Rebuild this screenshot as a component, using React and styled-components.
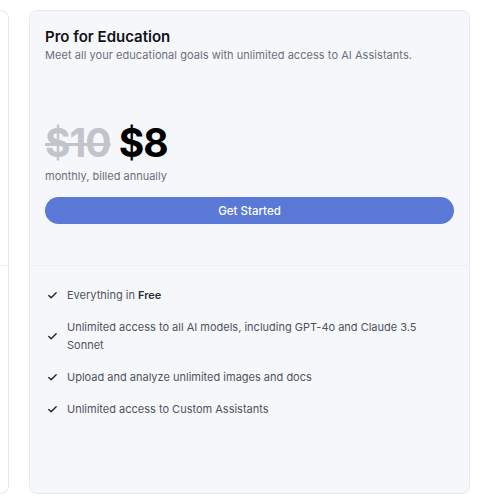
import React from "react";
import styled, { createGlobalStyle } from "styled-components";

const Global = createGlobalStyle`
  html, body { margin: 0; padding: 0; background: #ffffff; overflow: hidden; }
  body { font-family: Inter, "Noto Sans", sans-serif; -webkit-font-smoothing: antialiased; }
`;

const Row = styled.div`
  display: flex;
  justify-content: flex-end;
  gap: 20px;
  width: 500px;
  box-sizing: border-box;
  padding: 10px 30px 0 0;
`;

const Card = styled.div`
  flex: 0 0 441px;
  height: 484px;
  box-sizing: border-box;
  border: 1px solid ${p => (p.$featured ? "#e7e9ef" : "#e5e7eb")};
  background: ${p => (p.$featured ? "#f6f7fb" : "#ffffff")};
  border-radius: 8px;
  display: flex;
  flex-direction: column;
  overflow: hidden;
`;

const Header = styled.div`
  height: 255px;
  box-sizing: border-box;
  padding: 16px 15px;
  border-bottom: 1px solid #eceef3;
  display: flex;
  flex-direction: column;
`;

const Title = styled.h2`
  margin: 0;
  font-size: 15px;
  line-height: 20px;
  font-weight: 600;
  color: #111318;
`;

const Desc = styled.p`
  margin: 0;
  font-size: 11px;
  line-height: 16px;
  letter-spacing: 0.05px;
  color: #6b6f7b;
`;

const PriceRow = styled.div`
  margin-top: 58px;
  display: flex;
  align-items: baseline;
  gap: 8px;
  font-size: 39px;
  line-height: 44px;
  font-weight: 700;
  letter-spacing: -1px;
`;

const OldPrice = styled.span`
  color: #c2c4cc;
  text-decoration: line-through;
  text-decoration-thickness: 3px;
`;

const NewPrice = styled.span`
  color: #000000;
`;

const Billing = styled.div`
  margin-top: 3px;
  font-size: 11px;
  line-height: 16px;
  color: #6b6f7b;
`;

const Button = styled.button`
  margin-top: 13px;
  height: 27px;
  width: 100%;
  border: none;
  border-radius: 14px;
  background: #5a78d6;
  color: #ffffff;
  font-family: inherit;
  font-size: 11.5px;
  font-weight: 500;
  cursor: pointer;
`;

const List = styled.ul`
  list-style: none;
  margin: 0;
  padding: 20px 16px 0 17px;
  display: flex;
  flex-direction: column;
  gap: 14px;
`;

const Item = styled.li`
  display: flex;
  align-items: center;
  gap: 9px;
  font-size: 11px;
  line-height: 18px;
  color: #4f535e;
  b { font-weight: 600; color: #2a2d35; }
`;

const Check = () => (
  <svg width="11" height="11" viewBox="0 0 24 24" fill="none" stroke="#222" strokeWidth="3" strokeLinecap="round" strokeLinejoin="round" style={{ flexShrink: 0 }}>
    <path d="M20 6 9 17l-5-5" />
  </svg>
);

const features = [
  <>Everything in <b>Free</b></>,
  <>Unlimited access to all AI models, including GPT-4o and Claude 3.5 Sonnet</>,
  <>Upload and analyze unlimited images and docs</>,
  <>Unlimited access to Custom Assistants</>,
];

export default function App() {
  return (
    <>
      <Global />
      <Row>
        <Card>
          <Header />
        </Card>
        <Card $featured>
          <Header>
            <Title>Pro for Education</Title>
            <Desc>Meet all your educational goals with unlimited access to AI Assistants.</Desc>
            <PriceRow>
              <OldPrice>$10</OldPrice>
              <NewPrice>$8</NewPrice>
            </PriceRow>
            <Billing>monthly, billed annually</Billing>
            <Button>Get Started</Button>
          </Header>
          <List>
            {features.map((f, i) => (
              <Item key={i}>
                <Check />
                <span>{f}</span>
              </Item>
            ))}
          </List>
        </Card>
      </Row>
    </>
  );
}
